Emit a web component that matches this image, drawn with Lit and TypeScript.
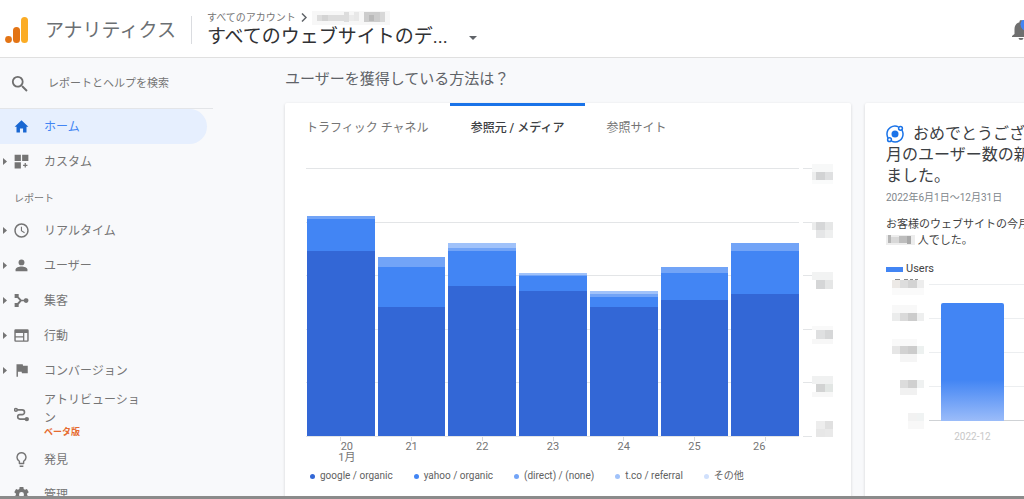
import { LitElement, html, svg, css, nothing } from "lit";
import { customElement, property } from "lit/decorators.js";

const icons = {
  search: svg`<path d="M15.5 14h-.79l-.28-.27A6.47 6.47 0 0 0 16 9.5 6.5 6.5 0 1 0 9.500 16c1.610 0 3.090-.59 4.230-1.570l.27.28v.79l5 4.990L20.490 19l-4.990-5zm-6 0C7.010 14 5 11.990 5 9.500S7.010 5 9.500 5 14 7.010 14 9.500 11.990 14 9.500 14z"/>`,
  home: svg`<path d="M9.500 21.500v-6.500h5v6.500h5.500v-9h3L12 2 1 12.500h3v9z"/>`,
  custom: svg`<path d="M1 1h10v10H1zM13 1h10v10H13zM1 13h10v10H1zM17 14.500h2v2.500h2.500v2H19v2.500h-2V19h-2.500v-2H17z"/>`,
  clock: svg`<path d="M11.990 .5C5.600 .5 .5 5.600 .5 12s5.100 11.500 11.490 11.500C18.400 23.500 23.500 18.400 23.500 12S18.400 .5 11.990 .5zM12 21.200a9.200 9.200 0 1 1 0-18.400 9.200 9.200 0 0 1 0 18.400zM12.800 6H11v6.900l5.400 3.300.9-1.500-4.500-2.700z"/>`,
  person: svg`<circle cx="12" cy="7" r="4.700"/><path d="M2.500 21v-2.500C2.500 15.300 8 13.500 12 13.500s9.500 1.800 9.500 5V21z"/>`,
  acquire: svg`<path d="M1 1.500h6.500v4.300l4.500 5.100h3.700a3.800 3.800 0 1 1 0 2.300h-3.700L7.500 18.200v4.300H1v-6.500h4.300L9 12 5.300 8H1z"/>`,
  behavior: svg`<path fill-rule="evenodd" d="M2.500 2h19a2 2 0 0 1 2 2v16a2 2 0 0 1-2 2h-19a2 2 0 0 1-2-2V4a2 2 0 0 1 2-2zM2.800 8v5h11.700V8zM2.800 15v4.800h11.700V15zM16.500 8v11.800h4.700V8z"/>`,
  flag: svg`<path d="M14.400 4.500 14 2H4v20h2.300v-8h5.900l.5 2.500H22v-12z"/>`,
  path: svg`<g fill="none" stroke="currentColor" stroke-width="2.600"><circle cx="3" cy="4.500" r="2.200"/><path d="M5 4.500h8a3.800 3.800 0 0 1 0 7.600H9.500a3.600 3.600 0 0 0 0 7.200H18"/></g><circle cx="20.500" cy="19.300" r="3.500"/>`,
  bulb: svg`<path d="M9 21.500h6V23a1 1 0 0 1-1 1h-4a1 1 0 0 1-1-1z"/><path d="M12 0a8.300 8.300 0 0 0-4.500 15.200v3.300a1 1 0 0 0 1 1h7a1 1 0 0 0 1-1v-3.300A8.300 8.300 0 0 0 12 0zm3.200 13.500-.9.700v3H9.700v-3l-.9-.7A6 6 0 1 1 15.200 13.500z"/>`,
  gear: svg`<path fill-rule="evenodd" d="M9 0h6l.5 3.300 2.100 1.200 3.100-1.200 2.900 5-2.600 2v2.800l2.600 2-2.900 5-3.100-1.200-2.100 1.200L15 23.500H9l-.5-3.400-2.100-1.200-3.100 1.200-2.900-5 2.600-2v-2.800L.4 8.300l2.900-5 3.100 1.200 2.100-1.200zM12 8a3.900 3.900 0 1 0 0 7.800A3.900 3.900 0 0 0 12 8z"/>`,
};

type IconName = keyof typeof icons;

interface NavEntry {
  icon: IconName;
  label: string;
  expandable?: boolean;
  active?: boolean;
  badge?: string;
}

const overview: NavEntry[] = [
  { icon: "home", label: "ホーム", active: true },
  { icon: "custom", label: "カスタム", expandable: true },
];

const reports: NavEntry[] = [
  { icon: "clock", label: "リアルタイム", expandable: true },
  { icon: "person", label: "ユーザー", expandable: true },
  { icon: "acquire", label: "集客", expandable: true },
  { icon: "behavior", label: "行動", expandable: true },
  { icon: "flag", label: "コンバージョン", expandable: true },
  { icon: "path", label: "アトリビューション", badge: "ベータ版" },
  { icon: "bulb", label: "発見" },
  { icon: "gear", label: "管理" },
];

/** Segment heights run from the bottom of the bar: google, yahoo, direct, t.co. */
const days = [
  { day: "20", month: "1月", parts: [185, 32, 3, 0] },
  { day: "21", parts: [129, 40, 10, 0] },
  { day: "22", parts: [150, 35, 3, 5] },
  { day: "23", parts: [145, 15, 1, 2] },
  { day: "24", parts: [129, 10, 3, 3] },
  { day: "25", parts: [136, 27, 6, 0] },
  { day: "26", parts: [142, 43, 8, 0] },
];

const series = [
  { name: "google / organic", tone: "s0" },
  { name: "yahoo / organic", tone: "s1" },
  { name: "(direct) / (none)", tone: "s2" },
  { name: "t.co / referral", tone: "s3" },
  { name: "その他", tone: "s4" },
];

/** Redacted values: cells are [x, y, width, height, fill]. */
type Cell = [number, number, number, number, string];
const mosaic = (w: number, h: number, cells: Cell[]) => html`
  <svg class="mosaic" width=${w} height=${h} viewBox="0 0 ${w} ${h}" aria-hidden="true">
    ${cells.map(([x, y, cw, ch, f]) => svg`<rect x=${x} y=${y} width=${cw} height=${ch} fill=${f} />`)}
  </svg>
`;

const accountCells: Cell[] = [
  [0, 0, 78, 14, "#f7f7f7"], [5, 4, 27, 6, "#dddddd"], [10, 4, 6, 6, "#d3d3d3"],
  [32, 1, 5, 10, "#dddddd"], [37, 4, 5, 6, "#ebebeb"], [42, 1, 5, 9, "#e8e8e8"], [52, 1, 16, 10, "#cccccc"],
  [57, 4, 5, 6, "#b9b9b9"], [68, 1, 5, 10, "#d8d8d8"],
];

const trafficCells: Cell[] = [
  [0, -4, 21, 8, "#f7f8f8"],
  [0, 4, 4, 8, "#eceded"], [4, 4, 9, 8, "#d2d3d4"], [13, 4, 8, 8, "#dfe0e1"], [0, 12, 21, 4, "#fafbfb"],
  [0, 54, 4, 8, "#ebecec"], [4, 54, 9, 8, "#d6d7d8"], [13, 54, 8, 8, "#e6e7e7"],
  [4, 62, 9, 8, "#e5e6e7"], [13, 62, 8, 8, "#eeefef"],
  [0, 104, 21, 8, "#f2f3f3"], [4, 112, 9, 9, "#d5d6d7"], [13, 112, 8, 9, "#e5e6e6"],
  [0, 158, 21, 4, "#f9f9f9"], [4, 162, 9, 9, "#dfe0e1"], [13, 162, 8, 9, "#d6d7d8"], [0, 171, 21, 5, "#f7f7f7"],
  [0, 208, 21, 8, "#f0f1f1"], [4, 216, 9, 8, "#d2d3d3"], [13, 216, 8, 8, "#e2e6e4"], [0, 224, 21, 5, "#f7f7f7"],
  [4, 253, 9, 8, "#ededed"], [13, 253, 8, 8, "#e0e0e0"], [4, 261, 9, 8, "#e7e7e7"], [13, 261, 8, 8, "#e9e9e9"],
];

const userAxisCells: Cell[] = [
  [3, -1, 5, 1, "#8a8a8a"], [12, -1, 4, 1, "#8a8a8a"], [18, -1, 3, 1, "#8a8a8a"], [23, -1, 3, 1, "#8a8a8a"],
  [0, 0, 8, 8, "#ece9e6"], [8, 0, 8, 8, "#dddddd"], [16, 0, 9, 8, "#d3d3d3"], [25, 0, 7, 8, "#ededed"],
  [0, 8, 32, 7, "#fafafa"], [0, 25, 25, 8, "#f8f8f8"],
  [0, 33, 8, 8, "#ebecec"], [8, 33, 8, 8, "#dadada"], [16, 33, 9, 8, "#cccccc"], [25, 33, 7, 8, "#eeefef"],
  [0, 59, 25, 7, "#f9f9f9"], [0, 66, 8, 8, "#e6e6e6"], [8, 66, 8, 8, "#d2d2d2"], [16, 66, 9, 8, "#cccccc"],
  [25, 66, 7, 8, "#edf1f0"], [8, 74, 17, 8, "#f5f5f5"],
  [8, 100, 8, 8, "#dcdcdc"], [16, 100, 9, 8, "#d0d0d0"], [25, 100, 7, 8, "#eff1f1"], [8, 108, 17, 7, "#f1f1f1"],
  [16, 133, 9, 8, "#f2f2f2"], [25, 133, 7, 8, "#f0f3f3"], [16, 141, 16, 8, "#f8f8f8"],
];

const visitorCells: Cell[] = [
  [0, 1, 29, 10, "#ededed"], [2, 1, 3, 8, "#b5b5b5"], [5, 3, 8, 6, "#d8d8d8"], [13, 2, 8, 7, "#bdbdbd"], [21, 2, 4, 8, "#a9a9a9"],
];

const base = css`
  * { box-sizing: border-box; }
  a { color: inherit; text-decoration: none; }
  svg { display: block; flex: none; }
  button { font: inherit; color: inherit; background: none; border: 0; padding: 0; margin: 0; cursor: pointer; }
`;

@customElement("nav-item")
class NavItem extends LitElement {
  @property({ attribute: false }) entry!: NavEntry;

  static styles = [base, css`
    :host { display: block; }
    .item {
      display: grid; grid-template-columns: 14px 15px minmax(0, 99px); column-gap: 0;
      align-items: center; min-height: 35px; margin-right: 6px; border-radius: 0 18px 18px 0;
      color: #757575; font-size: 12px; line-height: 18px;
    }
    .arrow { margin-left: 3px; }
    .icon { grid-column: 2; }
    .text { grid-column: 3; margin-left: 15px; margin-right: -15px; }
    .badge { display: block; color: #e66b2f; font-size: 9px; line-height: 10px; font-weight: 700; }
    .tall { padding: 3px 0 5px; }
    .active { background: #e6effe; color: #4285f4; }
    .active .icon { color: #1967d2; }
  `];

  render() {
    const { icon, label, expandable, active, badge } = this.entry;
    return html`
      <a href="#" class="item ${active ? "active" : ""} ${badge ? "tall" : ""}" aria-current=${active ? "page" : nothing}>
        ${expandable ? html`<svg class="arrow" width="4" height="7" viewBox="0 0 4 7" fill="currentColor"><path d="M0 0v7l4-3.500z"/></svg>` : nothing}
        <svg class="icon" width="15" height="15" viewBox="0 0 24 24" fill="currentColor">${icons[icon]}</svg>
        <span class="text">${label}${badge ? html`<span class="badge">${badge}</span>` : nothing}</span>
      </a>
    `;
  }
}

@customElement("traffic-chart")
class TrafficChart extends LitElement {
  static styles = [base, css`
    :host { display: block; }
    .chart { display: grid; grid-template-columns: minmax(0, 1fr) 13px 21px; }
    .lines, .ticks { display: flex; flex-direction: column; justify-content: space-between; height: 269px; }
    .line { height: 1px; background: #e3e5e7; }
    .lines { grid-area: 1 / 1; }
    .ticks { grid-area: 1 / 2; margin-left: 4px; }
    .values { grid-area: 1 / 3; }
    .bars {
      grid-area: 1 / 1; display: flex; gap: 3px; align-items: flex-end; height: 268px; margin-left: 1px;
      z-index: 1;
    }
    .bar { flex: 1; display: flex; flex-direction: column-reverse; }
    .s0 { background: #3367d6; }
    .s1 { background: #4285f4; }
    .s2 { background: #72a4f7; }
    .s3 { background: #a0c2fa; }
    .s4 { background: #d0e0fc; }
    .days { grid-area: 2 / 1; display: flex; gap: 3px; margin-left: 1px; }
    .day {
      flex: 1; display: flex; flex-direction: column; align-items: center;
      color: #757575; font-size: 11px; line-height: 11px;
    }
    .day::before { content: ""; width: 1px; height: 4px; background: #d5d7da; }
    .day:first-child span { margin-left: 12px; }
    .day:last-child span { margin-right: 12px; }
    .legend {
      display: flex; gap: 21px; margin: 6px 0 0; padding: 0 0 0 4px; list-style: none;
      color: #616161; font-size: 10px; line-height: 14px; white-space: nowrap;
    }
    .key { display: flex; align-items: center; gap: 5px; }
    .dot { width: 5px; height: 5px; border-radius: 50%; }
    .mosaic { overflow: visible; }
  `];

  render() {
    const rules = Array.from({ length: 6 }, () => html`<div class="line"></div>`);
    return html`
      <div class="chart">
        <div class="lines">${rules}</div>
        <div class="ticks">${rules}</div>
        <div class="bars">
          ${days.map((d) => html`<div class="bar">
            ${d.parts.map((h, i) => html`<div class="s${i}" style="height:${h}px"></div>`)}
          </div>`)}
        </div>
        <div class="values">${mosaic(21, 268, trafficCells)}</div>
        <div class="days">
          ${days.map((d) => html`<div class="day"><span>${d.day}</span>${d.month ? html`<span>${d.month}</span>` : nothing}</div>`)}
        </div>
      </div>
      <ul class="legend">
        ${series.map((s) => html`<li class="key"><span class="dot ${s.tone}"></span>${s.name}</li>`)}
      </ul>
    `;
  }
}

@customElement("insight-card")
class InsightCard extends LitElement {
  static styles = [base, css`
    :host { display: block; padding: 20px 21px; white-space: nowrap; color: #424242; }
    h2 { margin: 0; font-size: 16px; line-height: 21px; font-weight: 400; color: #3c4043; }
    .badge { display: inline-block; vertical-align: -4px; margin-right: 9px; }
    .period { margin: 4px 0 0; font-size: 10px; line-height: 16px; color: #80868b; }
    .body { margin: 11px 0 0; font-size: 11px; line-height: 16px; }
    .body .mosaic { display: inline-block; vertical-align: -2px; }
    .legend { display: flex; align-items: center; gap: 3px; margin-top: 13px; font-size: 11px; line-height: 14px; }
    .swatch { width: 17px; height: 5px; background: #4285f4; }
    .chart { display: grid; grid-template-columns: 43px 1fr; grid-template-rows: 141px auto; margin-top: 4px; }
    .axis { grid-area: 1 / 1 / 3 / 2; padding-left: 6px; }
    .lines { grid-area: 1 / 2; display: flex; flex-direction: column; justify-content: space-between; margin-top: 4px; }
    .line { height: 1px; background: #eceef0; }
    .line:last-child { background: #cfd2d5; }
    .bars { grid-area: 1 / 2; display: flex; align-items: flex-end; margin-top: 4px; padding-left: 12px; z-index: 1; }
    .bar { width: 63px; height: 118px; border-radius: 2px 2px 0 0; background: linear-gradient(#4285f4 65%, #9bbcf9); }
    .label { grid-area: 2 / 2; width: 63px; margin: 9px 0 0 12px; text-align: center; font-size: 10px; line-height: 14px; color: #c8c8c8; }
    .mosaic { overflow: visible; }
  `];

  render() {
    return html`
      <h2><svg class="badge" width="18" height="18" viewBox="0 0 18 18" fill="none" stroke="#1a73e8" stroke-width="1.500">
          <circle cx="9" cy="9" r="3.500" fill="#1a73e8" stroke="none"/>
          <path d="M1 9.500A8 8 0 0 1 12.500 1.800M17 8.500A8 8 0 0 1 5.500 16.200M1 9.500a8 8 0 0 0 1.200 3.700M17 8.500a8 8 0 0 0-1.200-3.700"/>
          <circle cx="14.500" cy="3.300" r="1.900"/><circle cx="3.500" cy="14.700" r="1.900"/>
        </svg>おめでとうございます。今<br>月のユーザー数の新記録を達成し<br>ました。</h2>
      <p class="period">2022年6月1日～12月31日</p>
      <p class="body">お客様のウェブサイトの今月のユーザー数は<br>${mosaic(29, 12, visitorCells)}人でした。</p>
      <div class="legend"><span class="swatch"></span>Users</div>
      <div class="chart">
        <div class="axis">${mosaic(32, 150, userAxisCells)}</div>
        <div class="lines">${[0, 1, 2, 3, 4].map(() => html`<div class="line"></div>`)}</div>
        <div class="bars"><div class="bar"></div></div>
        <div class="label">2022-12</div>
      </div>
    `;
  }
}

@customElement("app-root")
class AppRoot extends LitElement {
  static styles = [base, css`
    :host {
      box-sizing: border-box; display: flex; flex-direction: column; height: 100vh; overflow: hidden;
      font-family: Roboto, "Noto Sans CJK JP", sans-serif; background: #f8f9fb; color: #3c4043;
      border-bottom: 3px solid #8b8b8b;
    }
    header {
      flex: none; display: flex; align-items: center; height: 58px; background: #fff;
      border-bottom: 1px solid #e0e0e0; padding: 2px 0 0 5px; overflow: hidden;
    }
    .brand { display: flex; align-items: center; gap: 17px; color: #6b6f73; font-size: 19px; line-height: 28px; }
    .brand span { padding-top: 3px; }
    .rule { width: 1px; height: 28px; margin: 0 15px; background: #dadce0; }
    .account { display: flex; align-items: flex-end; gap: 21px; text-align: left; }
    .names { display: flex; flex-direction: column; }
    .crumb { display: flex; align-items: center; gap: 5px; color: #757575; font-size: 10px; line-height: 14px; }
    .property { font-size: 19px; line-height: 24px; color: #303134; }
    .caret { margin-bottom: 9px; }
    .bell { display: grid; margin-left: auto; margin-right: -6px; }
    .frame { flex: 1; min-height: 0; display: flex; overflow: hidden; }
    aside { flex: none; width: 213px; }
    .search { display: flex; align-items: center; gap: 19px; height: 51px; padding: 2px 0 0 11px; border-bottom: 1px solid #e3e5e8; color: #6f6f6f; }
    .search input {
      flex: 1; min-width: 0; border: 0; padding: 0; background: none; outline: none;
      font: inherit; font-size: 11px; line-height: 16px; color: #6f6f6f;
    }
    .search input::placeholder { color: #757575; opacity: 1; }
    .section { margin: 0; padding: 12px 0 6px 14px; font-size: 10px; line-height: 16px; font-weight: 400; color: #757575; }
    main { flex: 1; min-width: 0; padding-left: 72px; }
    h1 { margin: 0; padding: 10px 0 13px; font-size: 15px; line-height: 22px; font-weight: 400; color: #5f6368; }
    .cards { display: flex; gap: 14px; margin-right: -121px; }
    .card { background: #fff; box-shadow: 0 1px 3px rgba(60, 64, 67, 0.2); border-radius: 2px; min-height: 420px; }
    .main-card { flex: 1; min-width: 0; padding: 0 18px 0 21px; }
    .side-card { flex: none; width: 280px; }
    .tabs { display: flex; margin-bottom: 16px; }
    .tab { padding: 14px 21px 16px; border-top: 3px solid transparent; font-size: 12px; line-height: 16px; color: #757575; white-space: nowrap; }
    .tab:first-child { padding-left: 0; }
    .tab[aria-selected="true"] { color: #3c4043; font-weight: 500; border-top-color: #1a73e8; }
  `];

  render() {
    return html`
      <header>
        <div class="brand">
          <svg width="23" height="26" viewBox="0 0 23 26">
            <rect x="16" y="0" width="7" height="26" rx="3.500" fill="#fbac25"/>
            <rect x="8" y="10" width="7" height="16" rx="3.500" fill="#e37415"/>
            <circle cx="3.500" cy="22.500" r="3.400" fill="#e37415"/>
          </svg>
          <span>アナリティクス</span>
        </div>
        <div class="rule"></div>
        <button class="account">
          <span class="names">
            <span class="crumb">すべてのアカウント
              <svg width="6" height="9" viewBox="0 0 6 9" fill="none" stroke="#5f6368" stroke-width="1.500"><path d="M1 .5l4 4-4 4"/></svg>
              ${mosaic(78, 14, accountCells)}
            </span>
            <span class="property">すべてのウェブサイトのデ...</span>
          </span>
          <svg class="caret" width="8" height="4" viewBox="0 0 8 4" fill="#5f6368"><path d="M0 0h8L4 4z"/></svg>
        </button>
        <button class="bell" aria-label="通知">
          <svg width="18" height="20" viewBox="0 0 18 20">
            <path fill="#6f6f6f" d="M9 0a1.500 1.500 0 0 0-1.500 1.500v.8C4.500 3 2.500 5.500 2.500 9v5L0 16v1h18v-1l-2.500-2V9c0-3.500-2-6-5-6.700v-.8A1.500 1.500 0 0 0 9 0zM6.500 18h5a2.500 2 0 0 1-5 0z"/>
            <circle cx="15" cy="4.500" r="6.500" fill="#4285f4"/>
          </svg>
        </button>
      </header>
      <div class="frame">
        <aside>
          <label class="search">
            <svg width="18" height="18" viewBox="2 2 20 20" fill="currentColor">${icons.search}</svg>
            <input type="search" aria-label="レポートとヘルプを検索" placeholder="レポートとヘルプを検索">
          </label>
          <nav>
            ${overview.map((e) => html`<nav-item .entry=${e}></nav-item>`)}
            <h2 class="section">レポート</h2>
            ${reports.map((e) => html`<nav-item .entry=${e}></nav-item>`)}
          </nav>
        </aside>
        <main>
          <h1>ユーザーを獲得している方法は？</h1>
          <div class="cards">
            <section class="card main-card">
              <div class="tabs" role="tablist">
                <button class="tab" role="tab" aria-selected="false">トラフィック チャネル</button>
                <button class="tab" role="tab" aria-selected="true">参照元 / メディア</button>
                <button class="tab" role="tab" aria-selected="false">参照サイト</button>
              </div>
              <traffic-chart></traffic-chart>
            </section>
            <section class="card side-card"><insight-card></insight-card></section>
          </div>
        </main>
      </div>
    `;
  }
}
